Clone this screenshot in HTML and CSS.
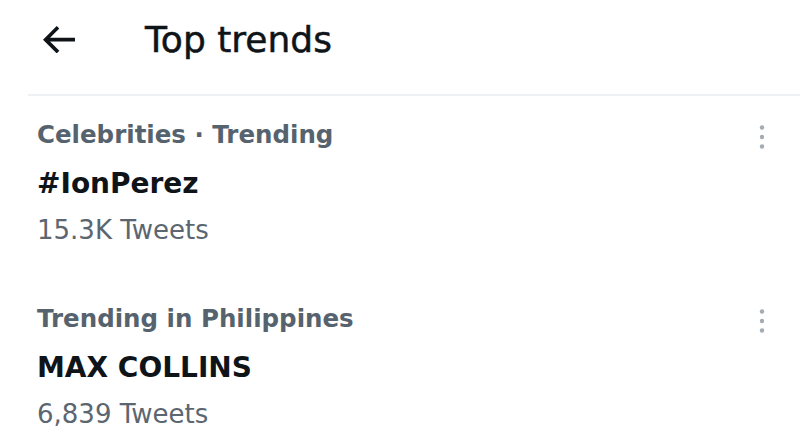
FILE: index.html
```html
<!DOCTYPE html>
<html lang="en">
<head>
<meta charset="utf-8">
<title>Top trends</title>
<link rel="stylesheet" href="styles.css">
</head>
<body>
<div class="page">
  <header class="header">
    <svg class="back" viewBox="3.586 4.54 17.414 14.92" aria-hidden="true"><path d="M7.414 13l5.043 5.04-1.414 1.42L3.586 12l7.457-7.46 1.414 1.42L7.414 11H21v2H7.414z"/></svg>
    <h1 class="title">Top trends</h1>
  </header>
  <div class="divider"></div>
  <ul class="trends">
    <li class="trend">
      <div class="trend-text">
        <div class="meta">Celebrities · Trending</div>
        <div class="name">#IonPerez</div>
        <div class="count">15.3K Tweets</div>
      </div>
      <svg class="more" viewBox="0 0 10 26" aria-hidden="true"><circle cx="5" cy="3.5" r="2.2"/><circle cx="5" cy="13" r="2.2"/><circle cx="5" cy="22.5" r="2.2"/></svg>
    </li>
    <li class="trend">
      <div class="trend-text">
        <div class="meta">Trending in Philippines</div>
        <div class="name">MAX COLLINS</div>
        <div class="count">6,839 Tweets</div>
      </div>
      <svg class="more" viewBox="0 0 10 26" aria-hidden="true"><circle cx="5" cy="3.5" r="2.2"/><circle cx="5" cy="13" r="2.2"/><circle cx="5" cy="22.5" r="2.2"/></svg>
    </li>
  </ul>
</div>
</body>
</html>
```

FILE: styles.css
```css
html, body {
  margin: 0;
  padding: 0;
  background: #ffffff;
}

body {
  font-family: "DejaVu Sans", "Liberation Sans", sans-serif;
  color: #0f1419;
  width: 800px;
  height: 439px;
  overflow: hidden;
}

.page {
  display: flex;
  flex-direction: column;
}

.header {
  height: 79px;
  display: flex;
  align-items: center;
  padding-left: 43px;
  gap: 70px;
}

.back {
  width: 32px;
  height: 27.4px;
  fill: #0f1419;
  flex: none;
}

.title {
  margin: 0;
  font-size: 36px;
  line-height: 40px;
  font-weight: 400;
  -webkit-text-stroke: 0.5px #0f1419;
  color: #0f1419;
}

.divider {
  margin-top: 15px;
  margin-left: 28px;
  height: 2px;
  background: #eef1f3;
}

.trends {
  list-style: none;
  margin: 0;
  padding: 0;
}

.trend {
  display: flex;
  justify-content: space-between;
  align-items: flex-start;
  padding: 23.5px 33px 34px 37px;
}

.trend:last-child {
  padding-bottom: 0;
}

.trend-text {
  display: flex;
  flex-direction: column;
}

.meta {
  font-size: 24.5px;
  line-height: 30px;
  font-weight: 700;
  color: #56636e;
}

.name {
  margin-top: 17px;
  font-size: 28px;
  line-height: 34px;
  font-weight: 700;
  color: #0f1419;
}

.count {
  margin-top: 13.5px;
  font-size: 26px;
  line-height: 32px;
  font-weight: 400;
  color: #5b6670;
}

.more {
  width: 10px;
  height: 26px;
  margin-top: 4px;
  fill: #a3acb4;
  flex: none;
}
```
